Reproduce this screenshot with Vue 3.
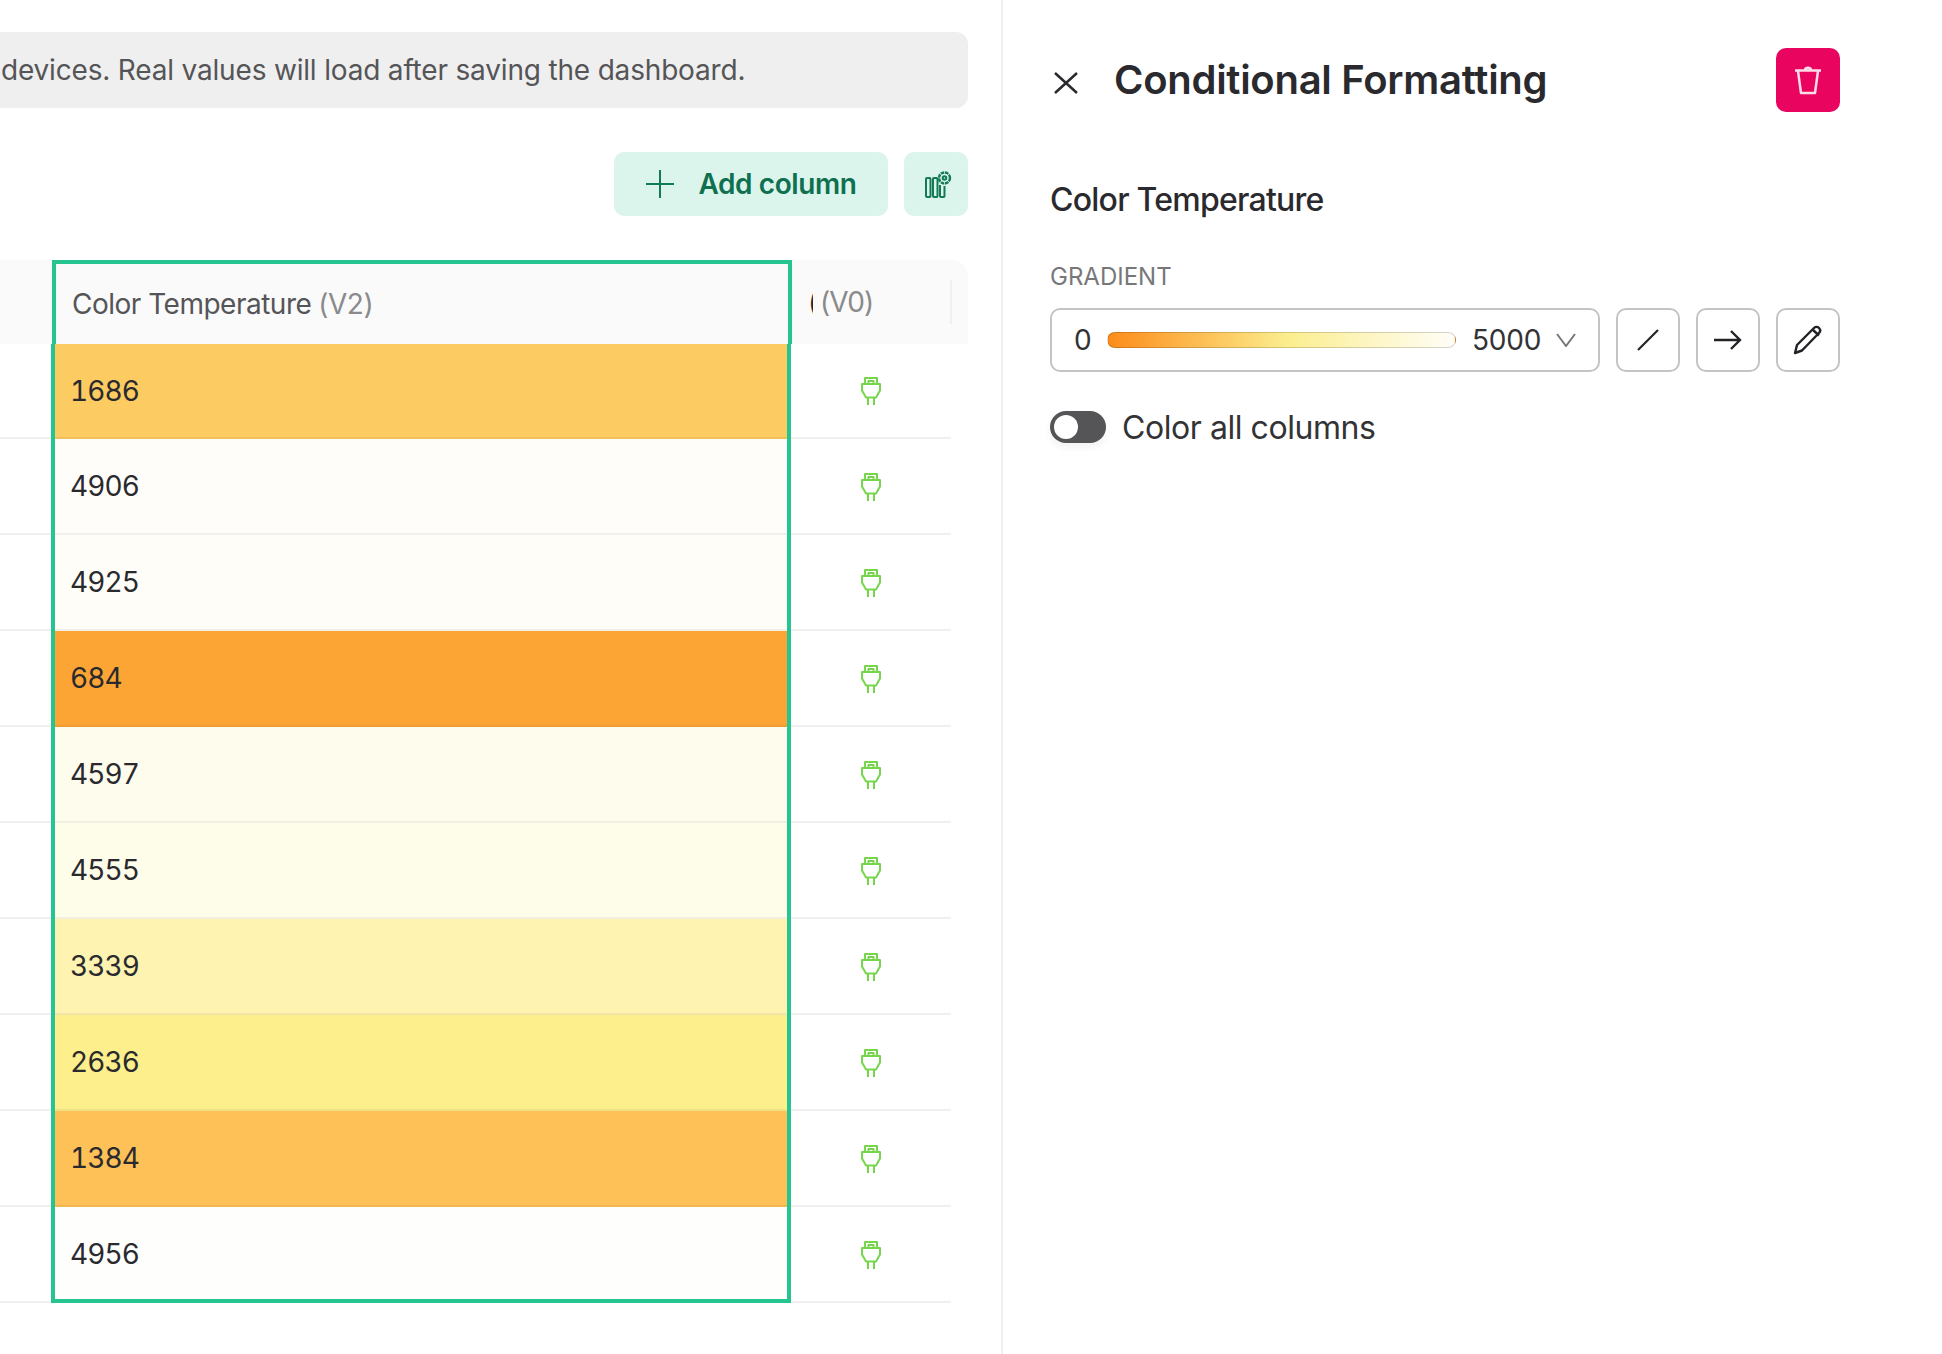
<script setup>
const rows = [
  { value: 1686, color: '#fccb62' },
  { value: 4906, color: '#fffdf9' },
  { value: 4925, color: '#fffdf8' },
  { value: 684, color: '#fca535' },
  { value: 4597, color: '#fefcec' },
  { value: 4555, color: '#fefdea' },
  { value: 3339, color: '#fef3b0' },
  { value: 2636, color: '#fcef8c' },
  { value: 1384, color: '#fdc157' },
  { value: 4956, color: '#fefefd' }
]
</script>

<template>
  <div class="page">
    <main class="main">
      <div class="banner">devices. Real values will load after saving the dashboard.</div>

      <div class="toolbar">
        <button class="add-btn">
          <svg width="30" height="28" viewBox="0 0 30 28" fill="none" stroke="#127a55" stroke-width="2">
            <path d="M15 0v28M1 14h28" />
          </svg>
          <span>Add column</span>
        </button>
        <button class="cols-btn">
          <svg width="27" height="28" viewBox="0 0 27 28" fill="none" stroke="#127a55" stroke-width="2">
            <rect x="1" y="8" width="4.500" height="19" rx="1" />
            <rect x="8" y="8" width="4.500" height="19" rx="1" />
            <path d="M15 15v11a1 1 0 0 0 1 1h2.500a1 1 0 0 0 1-1v-10" />
            <circle cx="19.500" cy="8" r="5.500" stroke-dasharray="3.500 0.800" stroke-width="2.400" />
            <circle cx="19.500" cy="8" r="1.800" />
          </svg>
        </button>
      </div>

      <div class="table">
        <div class="head">
          <div class="head-stub"></div>
          <div class="head-sel">Color Temperature <span class="muted">(V2)</span></div>
          <div class="head-next">
            <span class="clipped">(</span><span class="muted">(V0)</span>
            <i class="divider"></i>
          </div>
        </div>

        <div class="body">
          <div v-for="(row, i) in rows" :key="i" class="row">
            <div class="stub"></div>
            <div class="cell" :style="{ background: row.color }">{{ row.value }}</div>
            <div class="plug">
              <svg width="22" height="30" viewBox="0 0 22 30" fill="none" stroke="#76d64b" stroke-width="2" stroke-linejoin="round">
                <path d="M5 8V2h12v6M8.500 8V5h5v3" />
                <path d="M2 8h18v6.500l-4 7h-10l-4-7z" />
                <path d="M8 22v7M14 22v7" />
              </svg>
            </div>
          </div>
          <div class="outline"></div>
        </div>
      </div>
    </main>

    <aside class="panel">
      <header class="panel-head">
        <button class="close">
          <svg width="24" height="22" viewBox="0 0 24 22" fill="none" stroke="#2a2a2e" stroke-width="2.500">
            <path d="M1 1l22 20M23 1L1 21" />
          </svg>
        </button>
        <h1 class="title">Conditional Formatting</h1>
        <button class="delete">
          <svg width="28" height="30" viewBox="0 0 28 30" fill="none" stroke="#ffdbe8" stroke-width="2.500" stroke-linejoin="round">
            <path d="M1 5.500h26M11 5c0-3 6-3 6 0" />
            <path d="M4 6l3 22h14L24 6" />
          </svg>
        </button>
      </header>

      <h2 class="subtitle">Color Temperature</h2>
      <div class="label">GRADIENT</div>

      <div class="controls">
        <div class="select">
          <span class="zero">0</span>
          <span class="bar"></span>
          <span class="max">5000</span>
          <svg width="20" height="14" viewBox="0 0 20 14" fill="none" stroke="#777" stroke-width="2">
            <path d="M1 1l9 12 9-12" />
          </svg>
        </div>
        <button class="square">
          <svg width="22" height="22" viewBox="0 0 22 22" fill="none" stroke="#222226" stroke-width="2.200">
            <path d="M1 21L21 1" />
          </svg>
        </button>
        <button class="square">
          <svg width="28" height="20" viewBox="0 0 28 20" fill="none" stroke="#222226" stroke-width="2.400">
            <path d="M0 10h26M17 1l9 9-9 9" />
          </svg>
        </button>
        <button class="square">
          <svg width="30" height="30" viewBox="0 0 30 30" fill="none" stroke="#222226" stroke-width="2.400" stroke-linejoin="round">
            <path d="M2 28l2-8L21 3c1.500-1.500 3.500-1.500 5 0s1.500 3.500 0 5L9 25.500z" />
            <path d="M19.500 4.500l6.500 6" />
          </svg>
        </button>
      </div>

      <div class="toggle-row">
        <span class="toggle"><span class="knob"></span></span>
        <span class="toggle-label">Color all columns</span>
      </div>
    </aside>
  </div>
</template>

<style scoped>
.page {
  display: flex;
  width: 1942px;
  height: 1354px;
  overflow: hidden;
  background: #fff;
  font-family: Inter, "Noto Sans", sans-serif;
  color: #2a2a2e;
}

button {
  font-family: inherit;
  border: none;
  padding: 0;
  cursor: pointer;
  display: flex;
  align-items: center;
  justify-content: center;
}

.main {
  width: 1001px;
  flex-shrink: 0;
  padding: 32px 33px 0 0;
  box-sizing: border-box;
}

.banner {
  height: 76px;
  display: flex;
  align-items: center;
  padding-left: 1px;
  background: #efefef;
  border-radius: 0 12px 12px 0;
  font-size: 28px;
  color: #555558;
  white-space: nowrap;
  letter-spacing: -0.18px;
}

.toolbar {
  display: flex;
  justify-content: flex-end;
  gap: 16px;
  margin-top: 44px;
}

.add-btn {
  width: 274px;
  height: 64px;
  gap: 23px;
  background: #dcf5ec;
  border-radius: 10px;
  font-size: 28px;
  font-weight: 600;
  color: #0f7050;
  letter-spacing: -0.4px;
}

.cols-btn {
  width: 64px;
  height: 64px;
  padding-left: 5px;
  background: #dcf5ec;
  border-radius: 10px;
}

.table {
  margin-top: 44px;
}

.head {
  display: flex;
  height: 84px;
  background: #fafafa;
  border-radius: 0 16px 0 0;
  font-size: 28px;
  color: #555558;
}

.head-stub {
  width: 52px;
}

.head-sel {
  width: 740px;
  box-sizing: border-box;
  border: 4px solid #26c490;
  border-bottom: none;
  padding: 0 0 0 16px;
  display: flex;
  align-items: center;
  gap: 7px;
  letter-spacing: -0.5px;
}

.muted {
  color: #8a8a8c;
}

.head-next {
  flex: 1;
  display: flex;
  align-items: center;
  padding-left: 18px;
  position: relative;
  letter-spacing: -1px;
}

.clipped {
  width: 3px;
  overflow: hidden;
  margin-right: 7px;
  text-indent: -2px;
  color: #2a2a2e;
}

.divider {
  position: absolute;
  right: 16px;
  top: 20px;
  width: 2px;
  height: 44px;
  background: #f0f0f0;
}

.body {
  position: relative;
  width: 951px;
  margin-top: -1px;
}

.row {
  display: flex;
  height: 96px;
  box-sizing: border-box;
  border-bottom: 2px solid #f0f0f0;
}

.stub {
  width: 51px;
}

.cell {
  width: 740px;
  box-sizing: border-box;
  margin-bottom: -2px;
  padding: 0 0 0 19px;
  display: flex;
  align-items: center;
  font-size: 28px;
  font-variant-numeric: tabular-nums;
  letter-spacing: -0.9px;
  color: #2a2a2e;
  border-bottom: 2px solid rgba(0, 0, 0, 0.05);
}

.row:first-of-type .cell {
  margin-top: 1px;
}

.row:last-of-type .cell {
  padding-bottom: 7px;
}

.plug {
  flex: 1;
  display: flex;
  align-items: center;
  justify-content: center;
  padding-top: 2px;
}

.outline {
  position: absolute;
  top: 1px;
  bottom: 0;
  left: 51px;
  width: 740px;
  box-sizing: border-box;
  border: 4px solid #26c490;
  border-top: none;
  pointer-events: none;
}

.panel {
  flex: 1;
  border-left: 2px solid #f0f0f0;
  padding: 48px 102px 0 47px;
}

.panel-head {
  display: flex;
  align-items: center;
  height: 64px;
}

.close {
  background: none;
  margin: 6px 36px 0 4px;
}

.title {
  margin: 0 0 2px;
  font-size: 40px;
  font-weight: 600;
  letter-spacing: -0.28px;
  color: #2a2a2e;
}

.delete {
  margin-left: auto;
  width: 64px;
  height: 64px;
  border-radius: 10px;
  background: #e8045f;
}

.subtitle {
  margin: 68px 0 0;
  font-size: 32px;
  font-weight: 500;
  line-height: 40px;
  letter-spacing: -0.75px;
  color: #2a2a2e;
}

.label {
  margin-top: 42px;
  font-size: 24px;
  line-height: 30px;
  color: #77777a;
}

.controls {
  display: flex;
  gap: 16px;
  margin-top: 16px;
}

.select {
  width: 550px;
  height: 64px;
  box-sizing: border-box;
  border: 2px solid #c4c4c4;
  border-radius: 10px;
  display: flex;
  align-items: center;
  padding: 0 21px 0 22px;
  font-size: 28px;
  color: #333336;
}

.zero {
  width: 33px;
}

.bar {
  width: 349px;
  height: 16px;
  box-sizing: border-box;
  border-radius: 8px;
  border: 1px solid rgba(0, 0, 0, 0.16);
  background: linear-gradient(90deg, #fb8c1a 0%, #fdc157 28%, #fbee8f 52%, #fffef8 100%);
}

.max {
  margin-left: 16px;
  margin-right: 15px;
  letter-spacing: -0.2px;
}

.square {
  width: 64px;
  height: 64px;
  box-sizing: border-box;
  border: 2px solid #c4c4c4;
  border-radius: 10px;
  background: #fff;
}

.toggle-row {
  display: flex;
  align-items: center;
  gap: 16px;
  margin-top: 35px;
}

.toggle {
  width: 56px;
  height: 32px;
  border-radius: 16px;
  background: #555558;
  display: flex;
  align-items: center;
  padding-left: 4px;
  box-sizing: border-box;
  box-shadow: 0 4px 8px rgba(0, 0, 0, 0.06);
}

.knob {
  width: 24px;
  height: 24px;
  border-radius: 50%;
  background: #fff;
}

.toggle-label {
  font-size: 32px;
  letter-spacing: -0.44px;
  padding-top: 1px;
  color: #333336;
}
</style>
